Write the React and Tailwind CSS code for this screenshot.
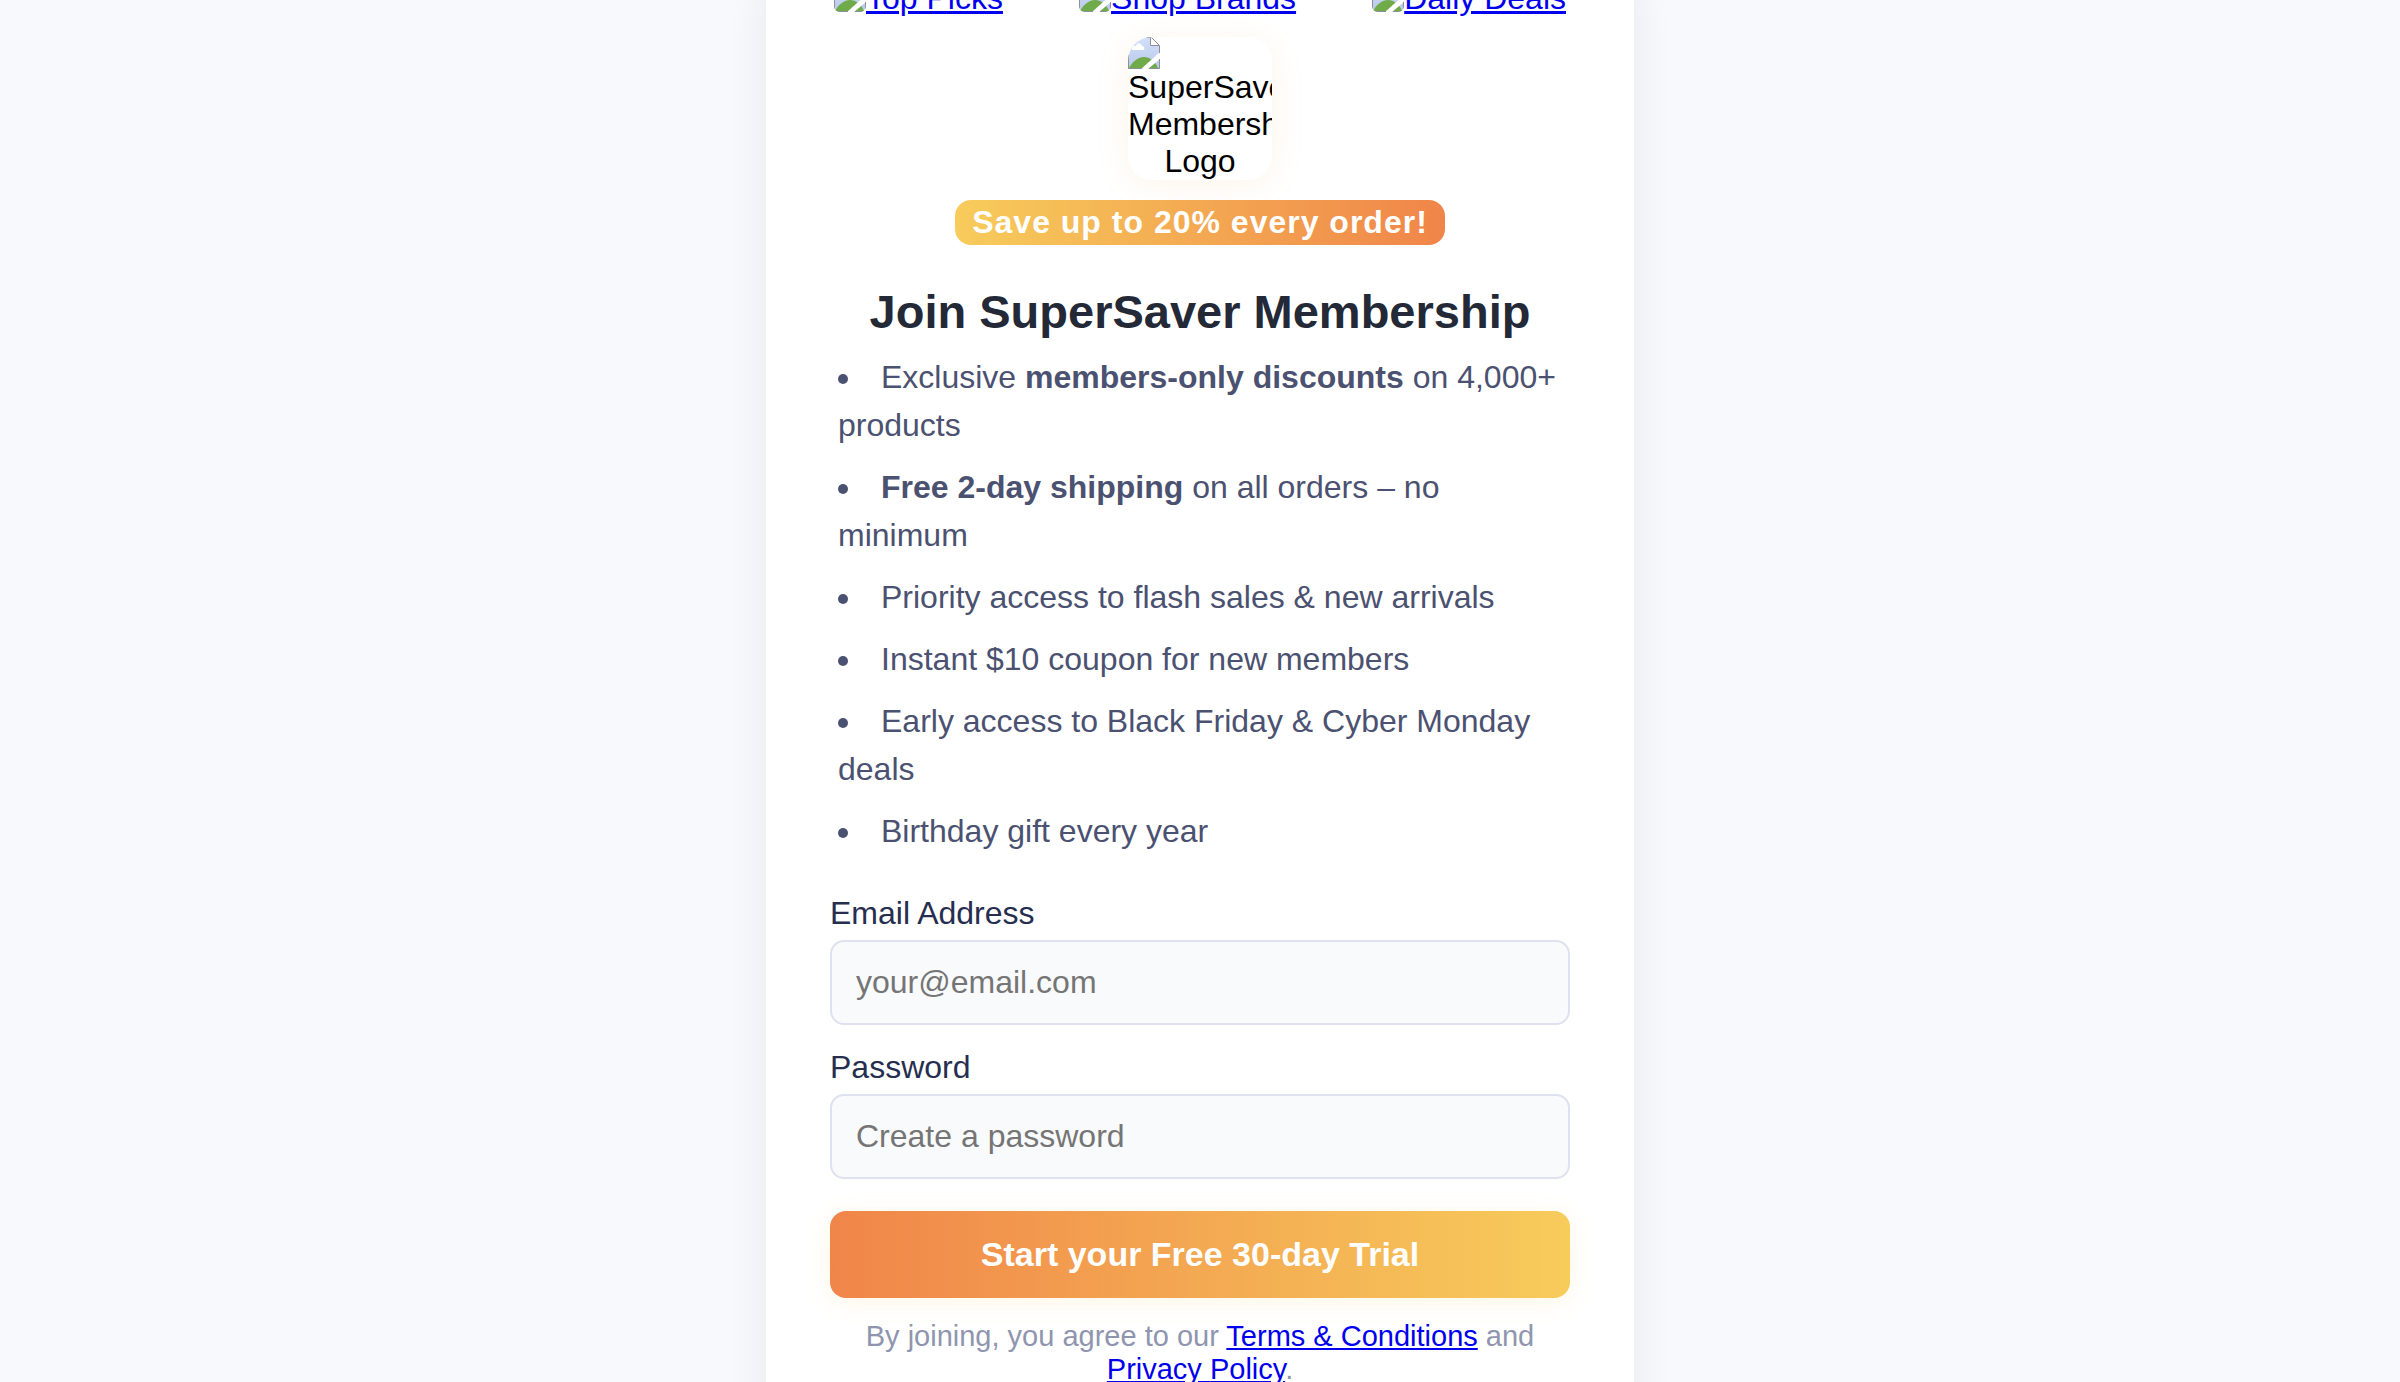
const BrokenImage = ({ className = "" }) => (
  <svg viewBox="0 0 32 32" className={"block size-8 shrink-0 " + className} aria-hidden="true">
    <defs>
      <linearGradient id="sky" x1="0" y1="0" x2="0" y2="1">
        <stop offset="0" stopColor="#d2e0fa" />
        <stop offset="1" stopColor="#b9c8ea" />
      </linearGradient>
    </defs>
    <path d="M0 0H22L32 9V32H0Z" fill="url(#sky)" />
    <path d="M4 13C3 10 6 8 8 9C9 5 13 5 14 9C17 9 17 13 15 13Z" fill="#fff" />
    <path d="M1 31C5 24 10 20 16 20C22 20 27 24 30 31Z" fill="#6fab48" />
    <path d="M13 32L32 15V22L20 32Z" fill="#fff" />
    <path d="M22 0V9H32V0Z" fill="#fff" />
    <path
      d="M22.5 0.5V8.5H31.5L23.5 0.5M31.5 8.5V16M31.5 22V31.5H21M14 31.5H0.5V0.5H22.5"
      fill="none"
      stroke="#8d9096"
    />
  </svg>
);

const navLinks = ["Top Picks", "Shop Brands", "Daily Deals"];

const fields = [
  { id: "email", label: "Email Address", type: "email", placeholder: "your@email.com" },
  { id: "password", label: "Password", type: "password", placeholder: "Create a password" },
];

const link = "text-[#0000ee] underline";

export default function App() {
  return (
    <div className="h-screen overflow-hidden bg-[#f7f9fd] font-['Liberation_Sans',Arial,sans-serif] text-[32px] leading-[37px] text-black">
      <main className="mx-auto -mt-8 flex w-full max-w-[868px] flex-col rounded-[36px] bg-white px-16 pt-3 pb-16 shadow-[0_4px_40px_rgba(34,40,49,0.08)]">
        <nav className="mb-5 flex justify-between px-1">
          {navLinks.map((name) => (
            <a key={name} href="#" className="flex text-[#0000ee]">
              <BrokenImage className="rounded-md" />
              <span className="underline">{name}</span>
            </a>
          ))}
        </nav>

        <div className="mb-5 h-[143px] w-36 self-center overflow-hidden rounded-3xl shadow-[0_4px_32px_rgba(240,180,80,0.13)]">
          <BrokenImage />
          <div className="text-center">SuperSaver Membership Logo</div>
        </div>

        <div className="mb-10 self-center rounded-2xl bg-linear-to-r/srgb from-[#f7cc5b] to-[#f08549] px-[17px] py-1 font-bold tracking-[1px] text-white">
          Save up to 20% every order!
        </div>

        <h1 className="mb-[14px] text-center text-[47px] leading-[54px] font-bold text-[#232936]">
          Join SuperSaver Membership
        </h1>

        <ul className="mb-10 flex list-inside list-disc flex-col gap-[14px] px-2 leading-[48px] text-[#4b5170]">
          <li>Exclusive <b>members-only discounts</b> on 4,000+ products</li>
          <li><b>Free 2-day shipping</b> on all orders – no minimum</li>
          <li>Priority access to flash sales &amp; new arrivals</li>
          <li>Instant $10 coupon for new members</li>
          <li>Early access to Black Friday &amp; Cyber Monday deals</li>
          <li>Birthday gift every year</li>
        </ul>

        <form className="mb-[22px] flex flex-col" onSubmit={(e) => e.preventDefault()}>
          <div className="mb-8 flex flex-col gap-6">
            {fields.map((f) => (
              <div key={f.id} className="flex flex-col gap-2">
                <label htmlFor={f.id} className="text-[#262e50]">{f.label}</label>
                <input
                  id={f.id}
                  type={f.type}
                  placeholder={f.placeholder}
                  className="h-[85px] w-full rounded-[14px] border-2 border-[#dfe1f0] bg-[#f9fafc] px-6 placeholder:text-[#757575]"
                />
              </div>
            ))}
          </div>
          <button
            type="submit"
            className="rounded-2xl bg-linear-to-r/srgb from-[#f08549] to-[#f7cc5b] py-6 text-[34px] leading-[39px] font-bold text-white shadow-[0_4px_24px_rgba(246,204,92,0.16)]"
          >
            Start your Free 30-day Trial
          </button>
        </form>

        <p className="text-center text-[29px] leading-[33px] text-[#8f95ae]">
          By joining, you agree to our <a href="#" className={link}>Terms &amp; Conditions</a> and{" "}
          <a href="#" className={link}>Privacy Policy</a>.
        </p>
      </main>
    </div>
  );
}
